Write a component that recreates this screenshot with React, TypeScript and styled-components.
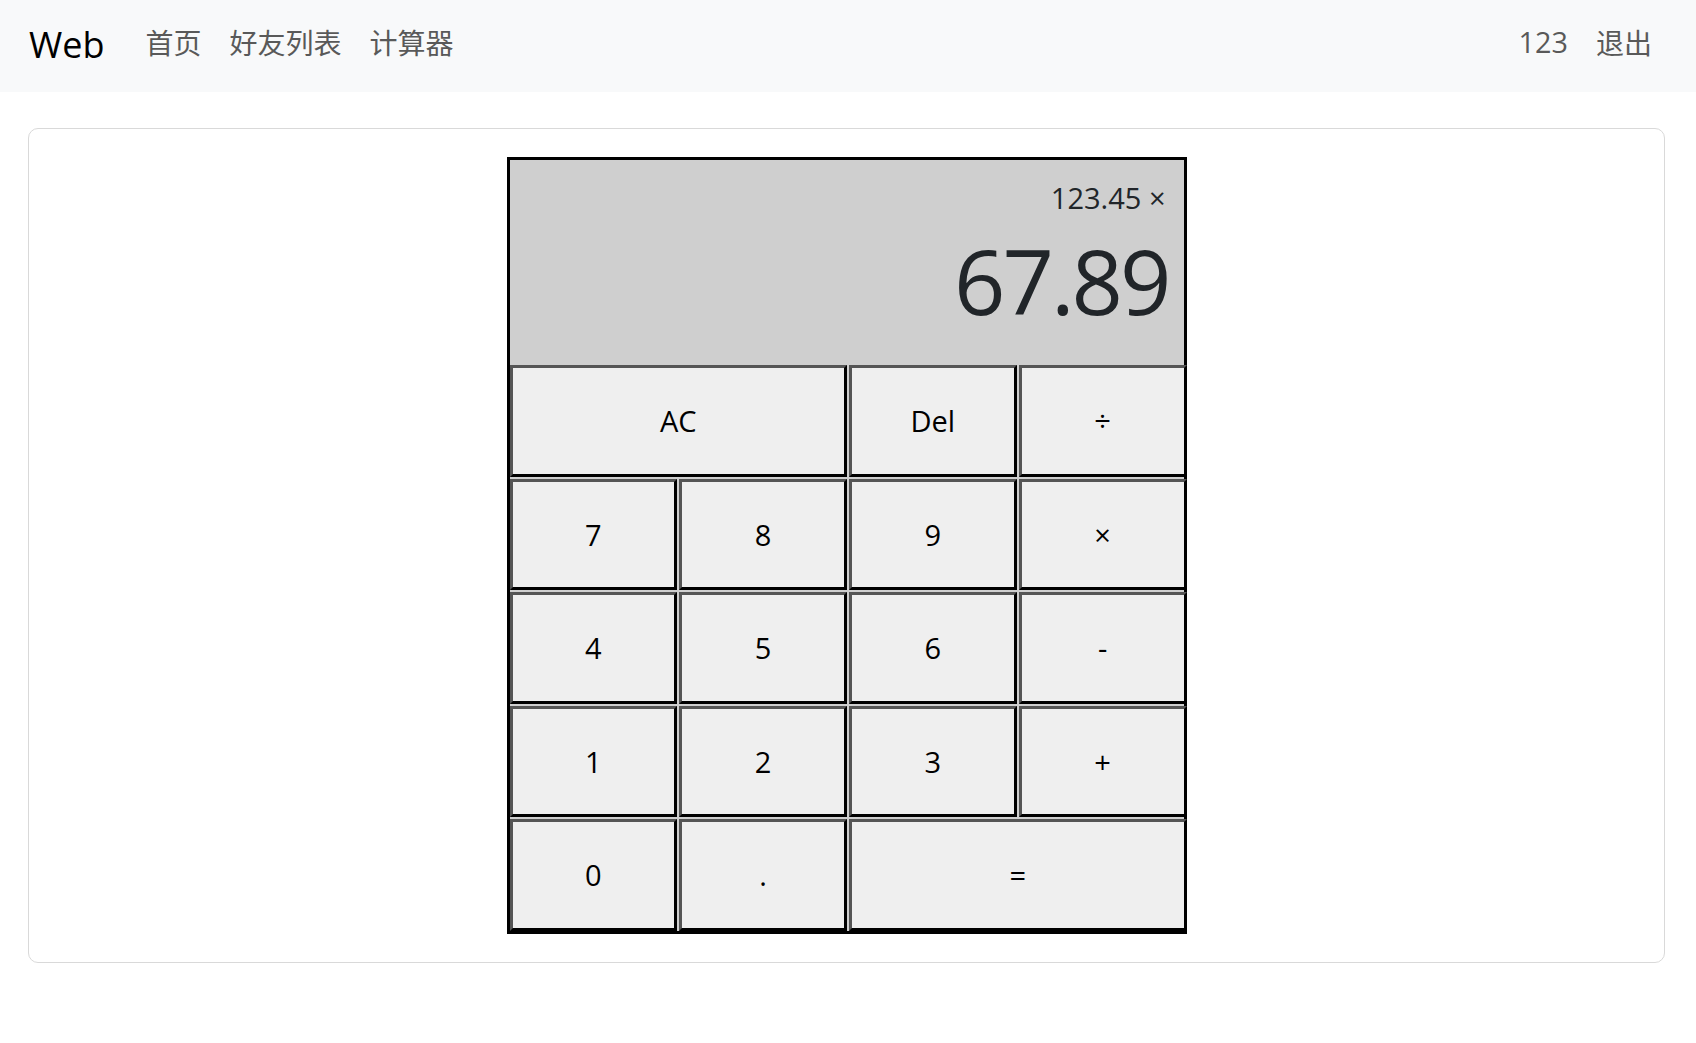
import React from "react";
import styled, { createGlobalStyle } from "styled-components";

const GlobalStyle = createGlobalStyle`
  html, body {
    margin: 0;
    padding: 0;
    background: #ffffff;
    font-family: "Open Sans", "Noto Sans CJK SC", sans-serif;
    color: #212529;
  }
  * { box-sizing: border-box; }
`;

const NavBar = styled.nav`
  height: 92px;
  background: #f8f9fa;
  display: flex;
  align-items: center;
  justify-content: space-between;
  padding: 0 30px 0 29px;
`;

const NavGroup = styled.div`
  display: flex;
  align-items: center;
`;

const Brand = styled.a`
  font-size: 36px;
  line-height: 54px;
  color: #000000;
  text-decoration: none;
  margin-right: 27px;
  margin-bottom: 2px;
`;

const NavLink = styled.a`
  font-family: "Noto Sans CJK SC", "Open Sans", sans-serif;
  font-size: 28px;
  line-height: 43px;
  padding: 0 14px;
  margin-bottom: 7px;
  color: #595959;
  text-decoration: none;
  cursor: pointer;
`;

const NavNumber = styled(NavLink)`
  font-family: "Open Sans", "Noto Sans CJK SC", sans-serif;
  font-size: 28.8px;
  padding: 0 14px;
  margin-bottom: 9px;
`;

const Card = styled.section`
  margin: 36px 31px 0 28px;
  border: 1px solid #d9d9d9;
  border-radius: 10px;
  padding: 28px 0;
  display: flex;
  justify-content: center;
`;

const Calculator = styled.div`
  width: 680px;
  border: 3px solid #000000;
  background: #cfcfcf;
  display: grid;
  grid-template-columns: repeat(4, 167.75px);
  grid-template-rows: 203px repeat(5, 111.5px);
  gap: 2px;
`;

const Display = styled.div`
  grid-column: 1 / -1;
  margin-right: 3px;
  background: #cfcfcf;
  display: flex;
  flex-direction: column;
  align-items: flex-end;
  padding: 16px 18px 0 18px;
`;

const LastOperand = styled.div`
  font-size: 29px;
  line-height: 43px;
  color: #212529;
  margin-bottom: 7px;
`;

const CurrentOperand = styled.div`
  font-size: 90px;
  line-height: 108px;
  letter-spacing: -3px;
  margin-right: -3px;
  color: #212529;
`;

const Key = styled.button<{ $span?: number }>`
  grid-column: span ${(p) => p.$span ?? 1};
  background: #efefef;
  border-width: 3px;
  border-style: solid;
  border-color: #555555 #000000 #000000 #555555;
  font-family: "Open Sans", sans-serif;
  font-size: 29px;
  color: #000000;
  padding: 0;
  margin: 0;
  cursor: pointer;
`;

const keys: { label: string; span?: number }[] = [
  { label: "AC", span: 2 },
  { label: "Del" },
  { label: "÷" },
  { label: "7" },
  { label: "8" },
  { label: "9" },
  { label: "×" },
  { label: "4" },
  { label: "5" },
  { label: "6" },
  { label: "-" },
  { label: "1" },
  { label: "2" },
  { label: "3" },
  { label: "+" },
  { label: "0" },
  { label: "." },
  { label: "=", span: 2 },
];

export default function App() {
  return (
    <>
      <GlobalStyle />
      <NavBar>
        <NavGroup>
          <Brand href="#">Web</Brand>
          <NavLink>首页</NavLink>
          <NavLink>好友列表</NavLink>
          <NavLink>计算器</NavLink>
        </NavGroup>
        <NavGroup>
          <NavNumber>123</NavNumber>
          <NavLink>退出</NavLink>
        </NavGroup>
      </NavBar>
      <Card>
        <Calculator>
          <Display>
            <LastOperand>123.45 ×</LastOperand>
            <CurrentOperand>67.89</CurrentOperand>
          </Display>
          {keys.map((k) => (
            <Key key={k.label} $span={k.span}>
              {k.label}
            </Key>
          ))}
        </Calculator>
      </Card>
    </>
  );
}
